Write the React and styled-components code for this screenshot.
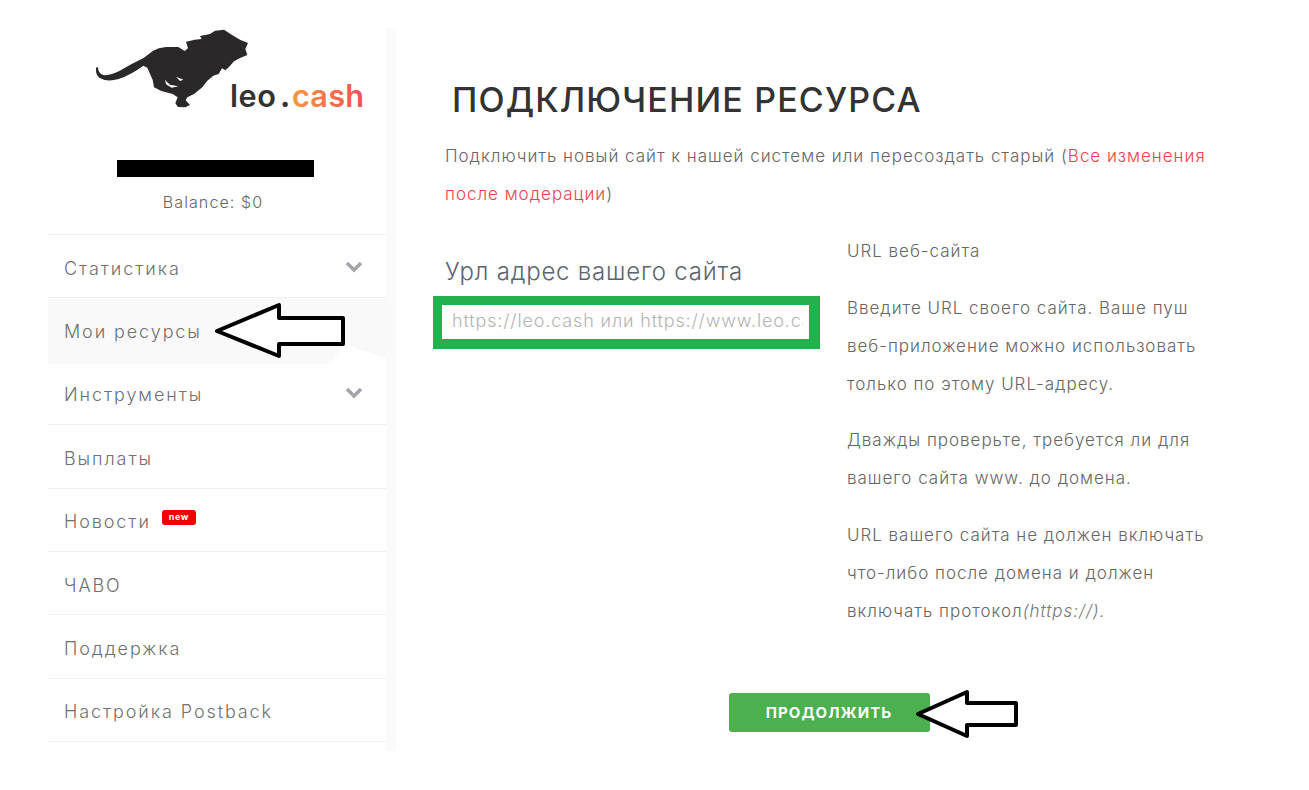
import styled, { createGlobalStyle } from 'styled-components'

const GlobalStyle = createGlobalStyle`
    html, body {
        margin: 0;
        padding: 0;
        background: #fff;
    }
    * {
        box-sizing: border-box;
    }
`

const Page = styled.div`
    position: relative;
    width: 1309px;
    height: 790px;
    overflow: hidden;
    display: flex;
    align-items: flex-start;
    padding: 28px 0 0 48px;
    background: #fff;
    font-family: "Inter", "Liberation Sans", sans-serif;
`

const Sidebar = styled.aside`
    width: 338px;
    flex-shrink: 0;
    background: #fff;
    box-shadow: 10px 0 0 #fafafa;
    padding-bottom: 9px;
`

const SidebarHead = styled.div`
    height: 206px;
    display: flex;
    flex-direction: column;
`

const LogoSvg = styled.svg`
    display: block;
    width: 280px;
    height: 87px;
    margin-left: 42px;
`

const HiddenName = styled.div`
    width: 197px;
    height: 17px;
    margin: 45px 0 0 69px;
    background: #000;
`

const Balance = styled.p`
    margin: 15px 0 0;
    width: 330px;
    text-align: center;
    font-size: 16px;
    font-weight: 300;
    letter-spacing: 1.1px;
    line-height: 20px;
    color: #666;
`

const Nav = styled.nav`
    border-top: 1px solid #eeeeee;
`

const NavRow = styled.div`
    position: relative;
    z-index: ${props => (props.$active ? 1 : 0)};
    height: 63.4px;
    display: flex;
    align-items: center;
    justify-content: space-between;
    padding: 4px 23px 0 16px;
    border-bottom: 1px solid ${props => (props.$active ? '#f9f9f9' : '#f0f0f0')};
    background: ${props => (props.$active ? '#f9f9f9' : '#fff')};
    box-shadow: ${props => (props.$active ? '0 2px 0 #f9f9f9' : 'none')};
`

const NavLabel = styled.span`
    display: flex;
    align-items: center;
    font-size: 18px;
    font-weight: 300;
    letter-spacing: 1.9px;
    color: #707070;
`

const Badge = styled.span`
    width: 34px;
    height: 15px;
    margin: 0 0 9px 11px;
    border-radius: 3px;
    background: #f20000;
    color: #fff;
    font-size: 9px;
    font-weight: 700;
    line-height: 14px;
    letter-spacing: 0.5px;
    text-align: center;
`

const Chevron = styled.svg`
    display: block;
    width: 18px;
    height: 12px;
    margin-bottom: 3px;
    fill: none;
    stroke: #a2a6aa;
    stroke-width: 3.6;
`

const Main = styled.main`
    width: 792px;
    margin-left: 47px;
    padding-top: 52px;
`

const Title = styled.h1`
    margin: 0 0 0 19px;
    font-size: 34px;
    line-height: 40px;
    font-weight: 500;
    letter-spacing: 1.15px;
    color: #333;
`

const Lead = styled.p`
    margin: 17px 0 0 12px;
    width: 770px;
    font-size: 17px;
    font-weight: 300;
    letter-spacing: 0.98px;
    line-height: 38px;
    color: #666;
`

const Accent = styled.span`
    color: #f0424a;
`

const Columns = styled.div`
    display: flex;
    gap: 27px;
    margin-top: 19px;
`

const FormColumn = styled.div`
    width: 387px;
    flex-shrink: 0;
    padding-top: 20px;
`

const FieldLabel = styled.label`
    display: block;
    margin-left: 12px;
    font-size: 24px;
    font-weight: 300;
    letter-spacing: 0.8px;
    line-height: 40px;
    color: #5b6470;
`

const UrlInput = styled.input`
    display: block;
    width: 387px;
    height: 53px;
    margin-top: 4px;
    padding: 0 6px 3px 10px;
    border-style: solid;
    border-color: #22b14c;
    border-width: 9px 11px 10px 9px;
    outline: none;
    background: #fff;
    font-family: inherit;
    font-size: 18px;
    font-weight: 300;
    letter-spacing: 0.85px;
    color: #444;

    &::placeholder {
        color: #b4b4b4;
        opacity: 1;
    }
`

const HelpColumn = styled.div`
    width: 365px;
`

const HelpText = styled.p`
    margin: 0 0 18.5px;
    font-size: 17px;
    font-weight: 300;
    letter-spacing: 0.98px;
    line-height: 38px;
    color: #666;

    em {
        color: #777;
    }
`

const Actions = styled.div`
    display: flex;
    justify-content: center;
    margin-top: 45px;
`

const NextButton = styled.button`
    width: 201px;
    height: 39px;
    border: none;
    border-radius: 3px;
    background: #4caf50;
    color: #fff;
    font-family: inherit;
    font-size: 15px;
    font-weight: 700;
    letter-spacing: 1.1px;
`

// стрелки нарисованы поверх скриншота
const Annotation = styled.svg`
    position: absolute;
    left: 0;
    top: 0;
    z-index: 2;
    pointer-events: none;
`

const menu = [
    { label: 'Статистика', arrow: true },
    { label: 'Мои ресурсы', active: true },
    { label: 'Инструменты', arrow: true },
    { label: 'Выплаты' },
    { label: 'Новости', badge: 'new' },
    { label: 'ЧАВО' },
    { label: 'Поддержка' },
    { label: 'Настройка Postback' },
]

function Logo() {
    return (
        <LogoSvg viewBox="0 9 840 261">
            <defs>
                <linearGradient id="cash" gradientUnits="userSpaceOnUse" x1="606" x2="822" y1="0" y2="0">
                    <stop offset="0" stopColor="#f8983a" />
                    <stop offset="1" stopColor="#f34d5c" />
                </linearGradient>
            </defs>
            <path
                fill="#2a2829"
                d="M24 126 Q24 146 40 150 Q62 153 92 136 Q128 114 162 98 L188 78 Q205 68 228 66 L265 66 L284 78 L294 70 L288 50 L314 44 L335 42 L330 33 L360 27 L375 17 L402 14 L425 29 L450 44 L474 54 L466 72 L472 90 L452 98 L432 109 L417 126 L406 136 L396 130 L386 147 L370 152 L352 167 L337 187 L312 207 L292 217 L287 226 L300 240 L286 247 L264 246 L256 235 L263 217 L248 207 L214 198 L192 187 L188 165 L172 128 L160 122 Q125 148 86 162 Q50 172 28 158 Q16 148 18 128 Z"
            />
            <path fill="#fff" d="M225 165 L240 179 L265 184 L245 188 L228 178 Z M258 155 L280 164 L270 168 Z" />
            <text x="420" y="246" fontFamily="Inter, sans-serif" fontSize="92" fontWeight="600" fill="#333" textLength="138" lengthAdjust="spacing">leo</text>
            <text x="570" y="246" fontFamily="Inter, sans-serif" fontSize="92" fontWeight="700" fill="#333">.</text>
            <text x="606" y="246" fontFamily="Inter, sans-serif" fontSize="92" fontWeight="600" fill="url(#cash)" textLength="216" lengthAdjust="spacing">cash</text>
        </LogoSvg>
    )
}

function App() {
    return (
        <Page>
            <GlobalStyle />
            <Sidebar>
                <SidebarHead>
                    <Logo />
                    <HiddenName />
                    <Balance>Balance: $0</Balance>
                </SidebarHead>
                <Nav>
                    {menu.map(item => (
                        <NavRow key={item.label} $active={item.active}>
                            <NavLabel>
                                {item.label}
                                {item.badge && <Badge>{item.badge}</Badge>}
                            </NavLabel>
                            {item.arrow && (
                                <Chevron viewBox="0 0 18 12">
                                    <path d="M2 2 L9 9 L16 2" />
                                </Chevron>
                            )}
                        </NavRow>
                    ))}
                </Nav>
            </Sidebar>
            <Main>
                <Title>ПОДКЛЮЧЕНИЕ РЕСУРСА</Title>
                <Lead>
                    Подключить новый сайт к нашей системе или пересоздать старый (<Accent>Все изменения после модерации</Accent>)
                </Lead>
                <Columns>
                    <FormColumn>
                        <FieldLabel>Урл адрес вашего сайта</FieldLabel>
                        <UrlInput placeholder="https://leo.cash или https://www.leo.cash" />
                    </FormColumn>
                    <HelpColumn>
                        <HelpText>URL веб-сайта</HelpText>
                        <HelpText>Введите URL своего сайта. Ваше пуш веб-приложение можно использовать только по этому URL-адресу.</HelpText>
                        <HelpText>Дважды проверьте, требуется ли для вашего сайта www. до домена.</HelpText>
                        <HelpText>URL вашего сайта не должен включать что-либо после домена и должен включать протокол<em>(https://).</em></HelpText>
                    </HelpColumn>
                </Columns>
                <Actions>
                    <NextButton>ПРОДОЛЖИТЬ</NextButton>
                </Actions>
            </Main>
            <Annotation width="1309" height="790" viewBox="0 0 1309 790">
                <polygon fill="#fff" points="328,366 345,345 386,358 386,366" />
                <polygon
                    fill="#fff"
                    stroke="#000"
                    strokeWidth="4"
                    strokeLinejoin="round"
                    points="217,331 279,305 279,318 343,318 343,344 279,344 279,356"
                />
                <polygon
                    fill="#fff"
                    stroke="#000"
                    strokeWidth="4"
                    strokeLinejoin="round"
                    points="918,714 967,692 967,703 1016,703 1016,725 967,725 967,736"
                />
            </Annotation>
        </Page>
    )
}

export default App
